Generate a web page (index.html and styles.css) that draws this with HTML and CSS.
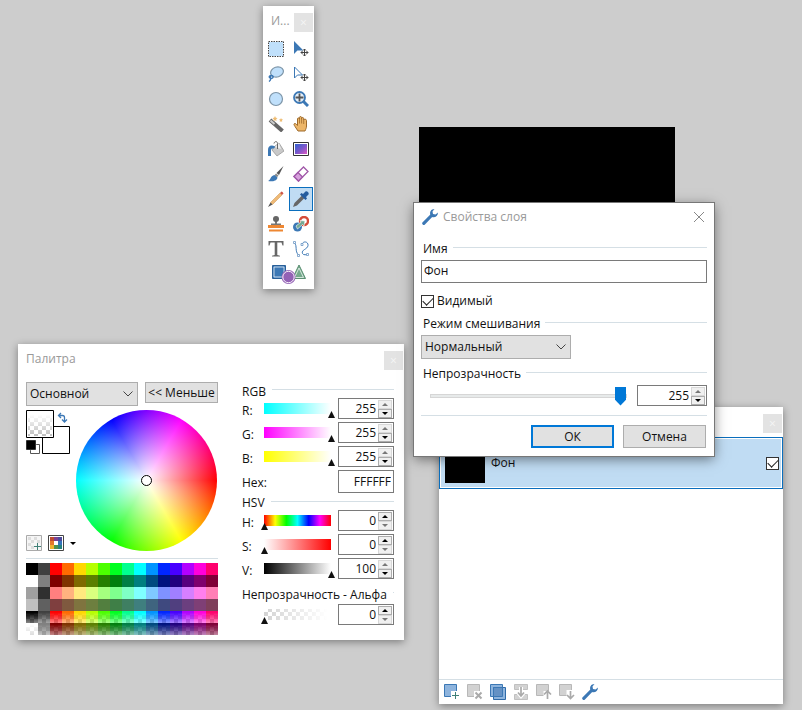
FILE: index.html
```
<!DOCTYPE html>
<html lang="ru">
<head>
    <meta charset="UTF-8">
    <meta name="viewport" content="width=device-width, initial-scale=1.0">
    <title>Редактор изображений</title>
    <link rel="stylesheet" href="styles.css">
</head>

<body>
    <main class="desktop">
        <div class="canvas"></div>

        <!-- Tools -->
        <section class="window tools">
            <header class="title-bar">
                <h2>И...</h2>
                <button class="tool-close" aria-label="Закрыть">×</button>
            </header>
            <div class="tool-grid">
                <button aria-label="Прямоугольник"><svg viewBox="0 0 16 16"><rect x="1" y="1" width="14" height="14" fill="#c0e0fb"/><rect x=".5" y=".5" width="15" height="15" fill="none" stroke="#444" stroke-dasharray="1.5 1"/></svg></button>
                <button aria-label="Переместить пиксели"><svg viewBox="0 0 16 16"><path d="M1 0v13l3.400-3.500h6z" fill="#3c78b5"/><path d="M11.500 8v7M8 11.500h7M10 9.500l1.500-1.500 1.500 1.500M10 13.500l1.500 1.500 1.500-1.500M9.500 10l-1.500 1.500 1.500 1.500M13.500 10l1.500 1.500-1.500 1.500" fill="none" stroke="#444"/></svg></button>
                <button aria-label="Лассо"><svg viewBox="0 0 16 16"><ellipse cx="9" cy="6" rx="6.500" ry="5" transform="rotate(-18 9 6)" fill="#c0e0fb" stroke="#7d95a8" stroke-width="1.200"/><path d="M3.500 9.500c-2 0-3 1.500-1.500 2.500s3.500 0 3-1.500-3.500-1-2.500 1.500c.5 1.500 0 2.500-1.500 3.500" fill="none" stroke="#3c78b5" stroke-width="1.400"/></svg></button>
                <button aria-label="Переместить выделение"><svg viewBox="0 0 16 16"><path d="M1.500 1v11l3-3h5z" fill="#fff" stroke="#3c78b5"/><path d="M11.500 8v7M8 11.500h7M10 9.500l1.500-1.500 1.500 1.500M10 13.500l1.500 1.500 1.500-1.500M9.500 10l-1.500 1.500 1.500 1.500M13.500 10l1.500 1.500-1.500 1.500" fill="none" stroke="#444"/></svg></button>
                <button aria-label="Эллипс"><svg viewBox="0 0 16 16"><circle cx="8" cy="8" r="6.500" fill="#c0e0fb" stroke="#7d95a8" stroke-width="1.200"/></svg></button>
                <button aria-label="Масштаб"><svg viewBox="0 0 16 16"><path d="M10 10l5 5" stroke="#3c78b5" stroke-width="3"/><circle cx="6.500" cy="6.500" r="5.500" fill="#e4eff9" stroke="#3c78b5" stroke-width="1.800"/><path d="M6.500 2.500v8M2.500 6.500h8" stroke="#555" stroke-width="1.800"/></svg></button>
                <button aria-label="Волшебная палочка"><svg viewBox="0 0 16 16"><path d="M2 4l12.500 11" stroke="#666" stroke-width="4"/><path d="M2.500 4.500l4 3.500" stroke="#ccc" stroke-width="2"/><path d="M7 0l.8 1.700 1.700.3-1.300 1.200.3 1.800L7 4.200 5.500 5l.3-1.800L4.500 2l1.700-.3zM13 2l.7 1.300 1.300.2-1 1 .2 1.500-1.200-.7-1.300.7.3-1.500-1-1 1.400-.2z" fill="#eebc72"/></svg></button>
                <button aria-label="Рука"><svg viewBox="0 0 16 16"><path d="M5 15L2 10.500C1 9 .5 8 1.500 7.500S4 9 4.500 9.500V3c0-1.500 2-1.500 2 0V1.500c0-1.300 2-1.300 2 0V2.500c.2-1.500 2.200-1.300 2.200.200V4c.3-1.300 2.800-1 2.800.5V10c0 2-.7 3-1.500 5z" fill="#edb668" stroke="#9d6a2c"/><path d="M6.500 3v4.500M8.600 2v5.500M10.700 4v4" stroke="#9d6a2c" stroke-width=".8"/></svg></button>
                <button aria-label="Заливка"><svg viewBox="0 0 16 16"><path d="M6 6l5-4 5 8-7 5-5-6z" fill="#c9c9c9" stroke="#999" stroke-width=".8"/><path d="M7 6l4-4 2 6z" fill="#eee"/><path d="M9.500 8V2.500C9.500 0 6.500 0 6 2.500" fill="none" stroke="#666"/><path d="M7 5.500C3 3.500 0 5 0 9v6h3V9.500C3 7 5 8 6.500 7z" fill="#3c78b5"/></svg></button>
                <button aria-label="Градиент"><svg viewBox="0 0 16 16"><defs><linearGradient id="grad" x1="0" y1="0" x2="1" y2="1"><stop offset="0" stop-color="#3262d0"/><stop offset=".5" stop-color="#7758cb"/><stop offset="1" stop-color="#dc58c3"/></linearGradient></defs><path d="M.5 1.500h15v13H.5z" fill="#fff" stroke="#333"/><path d="M2 3h12v10H2z" fill="url(#grad)"/></svg></button>
                <button aria-label="Кисть"><svg viewBox="0 0 16 16"><path d="M15.500 0L11 9 8.500 7z" fill="#555"/><path d="M8 7.500l2.500 2-1.500 1.800-2.500-2z" fill="#888"/><path d="M6.500 9l3 2.500C9 15 4 16 0 15c3-1 2-5 6.500-6z" fill="#3c78b5"/></svg></button>
                <button aria-label="Ластик"><svg viewBox="0 0 16 16"><path d="M1 10.500L10.500 1 15 5.500 5.500 15z" fill="#fff" stroke="#a057a8" stroke-width="1.300"/><path d="M1 10.500L5 6.500l4.500 4.500-4 4z" fill="#d6a0dc" stroke="#a057a8" stroke-width="1.300"/></svg></button>
                <button aria-label="Карандаш"><svg viewBox="0 0 16 16"><path d="M2.500 11.500l9.500-9.500 2 2-9.500 9.500z" fill="#efba77" stroke="#cb9048" stroke-width=".5"/><path d="M0 16l2.500-4.500 2 2z" fill="#555"/><path d="M12 2l1.500-1.500q1 0 2 2L14 4z" fill="#cf5648"/></svg></button>
                <button class="selected" aria-label="Пипетка"><svg viewBox="0 0 16 16"><path d="M0 16l1.500-4L9 4.500 11.500 7 4 14.500z" fill="#666"/><path d="M7 3.500L8.500 2 10 3l2.500-2.500c1.500-1 4 1.500 3 3L13 6l1 1.500L12.500 9z" fill="#245c9e"/></svg></button>
                <button aria-label="Штамп"><svg viewBox="0 0 16 16"><path d="M7 4h2v4H7zM3 7.500h10v1.500H3z" fill="#777"/><circle cx="8" cy="3" r="3" fill="#666"/><path d="M0 9h16v3H0zM1 13.500h14v2H1z" fill="#ee8732"/></svg></button>
                <button aria-label="Замена цвета"><svg viewBox="0 0 16 16"><circle cx="11" cy="5" r="4" fill="#fff" stroke="#d54c39" stroke-width="2.400"/><circle cx="4.500" cy="11" r="4.500" fill="#3c78b5"/><path d="M3 10l5-4-1-1.500 5 .5-1 5-1.500-1.500-5 4.500z" fill="#75a993" stroke="#fff" stroke-width=".6"/></svg></button>
                <button aria-label="Текст"><svg viewBox="0 0 16 16"><path d="M.5 0h15v4.500h-1L13.500 1.500H9.300v12.500l2.700.7v.8H4v-.8l2.700-.7V1.500H2.500l-1 3h-1z" fill="#666"/></svg></button>
                <button aria-label="Линия или кривая"><svg viewBox="0 0 16 16"><path d="M1.500 2c3 3 0 8 4 12M9 3.500c1-4 6.500-3 6 1s-7 4-5.500 8c1 2 4 1 5.500 1" fill="none" stroke="#3c78b5"/><path d="M.5.500h2v2h-2zM4.500 13.500h2v2h-2zM8 2.500h2v2H8zM13.500 12.500h2v2h-2z" fill="#fff" stroke="#6c97c4" stroke-width=".8"/></svg></button>
                <button class="shapes" aria-label="Фигуры"><svg viewBox="0 0 34 20"><path d="M.5 1.500h13v13H.5z" fill="#3c78b5" stroke="#285f98"/><path d="M2 3h10v10H2z" fill="none" stroke="#fff" stroke-width=".7"/><path d="M27 1l6.500 13.500h-13z" fill="#75a98c" stroke="#5b9073"/><path d="M27 4l4.500 9.500h-9z" fill="#75a98c" stroke="#fff" stroke-width=".7"/><circle cx="16.500" cy="13" r="7" fill="#9361b5"/><circle cx="16.500" cy="13" r="5.700" fill="#9361b5" stroke="#fff" stroke-width=".9"/></svg></button>
            </div>
        </section>

        <!-- Colors -->
        <section class="window colors">
            <header class="title-bar">
                <h2>Палитра</h2>
                <button class="tool-close" aria-label="Закрыть">×</button>
            </header>
            <div class="colors-body">
                <div class="colors-left">
                    <div class="colors-top">
                        <div class="select-box">
                            <select aria-label="Цвет"><option>Основной</option></select>
                            <svg viewBox="0 0 10 6"><path d="M.5.500L5 5 9.500.500"/></svg>
                        </div>
                        <button class="button less">&lt;&lt; Меньше</button>
                    </div>
                    <div class="picker">
                        <div class="picker-side">
                            <svg class="swatches" viewBox="0 0 44 44">
                                <defs>
                                    <pattern id="check" width="8" height="8" patternUnits="userSpaceOnUse"><path d="M0 0h8v8H0z" fill="#fff"/><path d="M0 0h4v4H0zM4 4h4v4H4z" fill="#bfbfbf"/></pattern>
                                    <linearGradient id="fade" x1="0" y1="0" x2="0" y2="1"><stop offset="0.1" stop-color="#fff"/><stop offset="1" stop-color="#fff" stop-opacity="0"/></linearGradient>
                                </defs>
                                <path d="M16.500 16.500h27v27h-27z" fill="#fff" stroke="#000"/>
                                <path d="M0 0h28v28H0z" fill="#fff"/>
                                <path d="M2 2h24v24H2z" fill="url(#check)"/>
                                <path d="M2 2h24v24H2z" fill="url(#fade)"/>
                                <path d="M.5.500h27v27H.5z" fill="none" stroke="#000"/>
                                <path d="M4.500 34.500h9v9h-9z" fill="#fff" stroke="#555"/>
                                <path d="M0 30h10v10H0z" fill="#000" stroke="#fff" stroke-width=".4"/>
                                <path d="M33 5.500h3.500q2 0 2 2V11M35 3l-2.500 2.500L35 8M36 9.500l2.500 2.500L41 9.500" fill="none" stroke="#3c78b5" stroke-width="1.300"/>
                            </svg>
                            <div class="palette-buttons">
                                <button aria-label="Добавить цвет"><svg viewBox="0 0 16 16"><path d="M.5.500h15v15H.5z" fill="#f5f5f5" stroke="#aaa"/><path d="M2 2h3v3H2zM8 2h3v3H8zM5 5h3v3H5zM11 5h3v3h-3zM2 8h3v3H2zM5 11h3v3H5z" fill="#ddd"/><path d="M11.500 8v7M8 11.500h7" stroke="#3f8077"/></svg></button>
                                <button aria-label="Палитры"><svg viewBox="0 0 16 16"><path d="M.5.500h15v15H.5z" fill="#fff" stroke="#444"/><path d="M2 2h4v4H2z" fill="#bd4b31"/><path d="M6 2h4v4H6z" fill="#7c4192"/><path d="M10 2h4v4h-4z" fill="#4c4a9b"/><path d="M2 6h4v4H2z" fill="#e3782c"/><path d="M10 6h4v4h-4z" fill="#3574bb"/><path d="M2 10h4v4H2z" fill="#ecb22f"/><path d="M6 10h4v4H6z" fill="#4d9150"/><path d="M10 10h4v4h-4z" fill="#27837f"/></svg></button>
                                <span class="drop-arrow"></span>
                            </div>
                        </div>
                        <div class="wheel"></div>
                    </div>
                    <div class="palette" id="palette"></div>
                </div>

                <div class="colors-right">
                    <h3 class="group rgb-title">RGB</h3>
                    <div class="channel">
                        <label for="red">R:</label>
                        <input class="ramp ramp-r" type="range" max="255" value="255" aria-label="R">
                        <span class="spin"><input id="red" type="text" value="255"><span class="arrows"><button class="up" disabled aria-label="Больше"></button><button class="down" aria-label="Меньше"></button></span></span>
                    </div>
                    <div class="channel">
                        <label for="green">G:</label>
                        <input class="ramp ramp-g" type="range" max="255" value="255" aria-label="G">
                        <span class="spin"><input id="green" type="text" value="255"><span class="arrows"><button class="up" disabled aria-label="Больше"></button><button class="down" aria-label="Меньше"></button></span></span>
                    </div>
                    <div class="channel">
                        <label for="blue">B:</label>
                        <input class="ramp ramp-b" type="range" max="255" value="255" aria-label="B">
                        <span class="spin"><input id="blue" type="text" value="255"><span class="arrows"><button class="up" disabled aria-label="Больше"></button><button class="down" aria-label="Меньше"></button></span></span>
                    </div>
                    <div class="channel">
                        <label for="hex">Hex:</label>
                        <input class="hex" id="hex" type="text" value="FFFFFF">
                    </div>
                    <h3 class="group hsv-title">HSV</h3>
                    <div class="channel">
                        <label for="hue">H:</label>
                        <input class="ramp ramp-h" type="range" max="360" value="0" aria-label="H">
                        <span class="spin"><input id="hue" type="text" value="0"><span class="arrows"><button class="up" aria-label="Больше"></button><button class="down" disabled aria-label="Меньше"></button></span></span>
                    </div>
                    <div class="channel">
                        <label for="sat">S:</label>
                        <input class="ramp ramp-s" type="range" max="100" value="0" aria-label="S">
                        <span class="spin"><input id="sat" type="text" value="0"><span class="arrows"><button class="up" aria-label="Больше"></button><button class="down" disabled aria-label="Меньше"></button></span></span>
                    </div>
                    <div class="channel">
                        <label for="val">V:</label>
                        <input class="ramp ramp-v" type="range" max="100" value="100" aria-label="V">
                        <span class="spin"><input id="val" type="text" value="100"><span class="arrows"><button class="up" disabled aria-label="Больше"></button><button class="down" aria-label="Меньше"></button></span></span>
                    </div>
                    <h3 class="group alpha-title"><label for="alpha">Непрозрачность - Альфа</label></h3>
                    <div class="channel">
                        <input class="ramp ramp-a" type="range" max="255" value="0" aria-label="Альфа">
                        <span class="spin"><input id="alpha" type="text" value="0"><span class="arrows"><button class="up" aria-label="Больше"></button><button class="down" disabled aria-label="Меньше"></button></span></span>
                    </div>
                </div>
            </div>
        </section>

        <!-- Layers -->
        <section class="window layers">
            <header class="title-bar">
                <button class="tool-close" aria-label="Закрыть">×</button>
            </header>
            <div class="layer-list">
                <div class="layer">
                    <span class="layer-thumb"></span>
                    <label for="layer-visible">Фон</label>
                    <input id="layer-visible" type="checkbox" checked>
                </div>
            </div>
            <footer class="layer-bar">
                <button aria-label="Добавить слой"><svg viewBox="0 0 16 16"><path d="M.5.500h12v12H.5z" fill="#8eb4dd" stroke="#3c78b5"/><path d="M7 7h9v9H7z" fill="#fff"/><path d="M11.500 8v7M8 11.500h7" stroke="#3f8077"/></svg></button>
                <button disabled aria-label="Удалить слой"><svg viewBox="0 0 16 16"><path d="M.5.500h12v12H.5z" fill="#d2d2d2" stroke="#b8b8b8"/><path d="M7 7h9v9H7z" fill="#fff"/><path d="M8.500 8.500l6 6M14.500 8.500l-6 6" stroke="#aaa" stroke-width="2"/></svg></button>
                <button aria-label="Дублировать слой"><svg viewBox="0 0 16 16"><path d="M.5.500h12v12H.5z" fill="#8eb4dd" stroke="#3c78b5"/><path d="M3.500 3.500h12v12h-12z" fill="#8eb4dd" stroke="#2e6aa8"/><path d="M3.500 3.500h9v9h-9z" fill="#6491c4" stroke="#3c78b5"/></svg></button>
                <button disabled aria-label="Объединить слой"><svg viewBox="0 0 16 16"><path d="M1.500.500h13v5h-13zM1.500 10.500h13v5h-13z" fill="#d2d2d2" stroke="#c0c0c0"/><path d="M8 3v8M5 8.500L8 12l3-3.500" fill="none" stroke="#fff" stroke-width="4"/><path d="M8 3v8M5 8.500L8 12l3-3.500" fill="none" stroke="#aaa" stroke-width="1.700"/></svg></button>
                <button disabled aria-label="Слой вверх"><svg viewBox="0 0 16 16"><path d="M.5.500h12v11H.5z" fill="#d2d2d2" stroke="#b8b8b8"/><path d="M7.500 7h8.500v9H7.500z" fill="#fff"/><path d="M11.500 7v8M8 10.500L11.500 7l3.500 3.500" fill="none" stroke="#aaa" stroke-width="1.700"/></svg></button>
                <button disabled aria-label="Слой вниз"><svg viewBox="0 0 16 16"><path d="M.5.500h12v11H.5z" fill="#d2d2d2" stroke="#b8b8b8"/><path d="M7.500 6h8.500v10H7.500z" fill="#fff"/><path d="M11.500 7v7.500M8 11l3.500 3.500L15 11" fill="none" stroke="#aaa" stroke-width="1.700"/></svg></button>
                <button aria-label="Свойства слоя"><svg viewBox="0 0 16 16"><path d="M1.800 14.300L9.500 6.500" stroke="#3c78b5" stroke-width="3.200" stroke-linecap="round"/><path d="M12.500 0C9 0 7.300 3 8.500 6l1.500 2c3 .8 6-.8 6-4.500L13.500 5.500 11 5 10.500 2.500z" fill="#3c78b5"/></svg></button>
            </footer>
        </section>

        <!-- Layer properties dialog -->
        <section class="window dialog">
            <header class="dialog-title">
                <svg viewBox="0 0 16 16"><path d="M1.800 14.300L9.500 6.500" stroke="#3c78b5" stroke-width="3.200" stroke-linecap="round"/><path d="M12.500 0C9 0 7.300 3 8.500 6l1.500 2c3 .8 6-.8 6-4.500L13.500 5.500 11 5 10.500 2.500z" fill="#3c78b5"/></svg>
                <h2>Свойства слоя</h2>
                <button class="dialog-close" aria-label="Закрыть"><svg viewBox="0 0 10 10"><path d="M0 0l10 10M10 0L0 10" stroke="#888"/></svg></button>
            </header>
            <form class="dialog-body">
                <h3 class="group"><label for="layer-name">Имя</label></h3>
                <input class="name-field" id="layer-name" type="text" value="Фон">
                <div class="check-row">
                    <input id="visible" type="checkbox" checked>
                    <label for="visible">Видимый</label>
                </div>
                <h3 class="group"><label for="blend">Режим смешивания</label></h3>
                <div class="select-box blend">
                    <select id="blend"><option>Нормальный</option></select>
                    <svg viewBox="0 0 10 6"><path d="M.5.500L5 5 9.500.500"/></svg>
                </div>
                <h3 class="group opacity-title"><label for="opacity">Непрозрачность</label></h3>
                <div class="opacity-row">
                    <input class="slider" type="range" max="255" value="255" aria-label="Непрозрачность">
                    <span class="spin"><input id="opacity" type="text" value="255"><span class="arrows"><button type="button" class="up" disabled aria-label="Больше"></button><button type="button" class="down" aria-label="Меньше"></button></span></span>
                </div>
                <div class="dialog-buttons">
                    <button type="button" class="button default">ОК</button>
                    <button type="button" class="button">Отмена</button>
                </div>
            </form>
        </section>
    </main>

    <script src="palette.js"></script>
</body>
</html>
```
FILE: palette.js
```
// Default palette, one array per row
var rows = [
    ["000000", "404040", "ff0000", "ff6a00", "ffd800", "b6ff00", "4cff00", "00ff21", "00ff90", "00ffff", "0094ff", "0026ff", "4800ff", "b200ff", "ff00dc", "ff006e"],
    ["ffffff", "808080", "7f0000", "7f3300", "7f6a00", "5b7f00", "267f00", "007f0e", "007f46", "007f7f", "004a7f", "00137f", "21007f", "57007f", "7f006e", "7f0037"],
    ["a0a0a0", "303030", "ff7f7f", "ffb27f", "ffe97f", "daff7f", "a5ff7f", "7fff8e", "7fffc5", "7fffff", "7fc9ff", "7f92ff", "a17fff", "d67fff", "ff7fed", "ff7fb6"],
    ["c0c0c0", "606060", "7f3f3f", "7f593f", "7f743f", "6d7f3f", "527f3f", "3f7f47", "3f7f62", "3f7f7f", "3f647f", "3f497f", "503f7f", "6b3f7f", "7f3f76", "7f3f5b"]
];

var palette = document.querySelector("#palette");

function addRow(colors, translucent) {
    colors.forEach(function(color) {
        var cell = document.createElement("button");
        cell.className = translucent ? "cell translucent" : "cell";
        cell.style.setProperty("--cell", "#" + color);
        cell.setAttribute("aria-label", "#" + color);
        palette.appendChild(cell);
    });
}

rows.forEach(function(colors) {
    addRow(colors, false);
});

// The last two rows repeat the first two at half opacity
addRow(rows[0], true);
addRow(rows[1], true);
```
FILE: styles.css
```
* {
    padding: 0;
    margin: 0;
    box-sizing: border-box;
}

:root {
    --blue: #0078d7;
    --line: #d5dfe5;
    --face: #e1e1e1;
    --edge: #adadad;
    --field: #7a7a7a;
}

body {
    background-color: #cdcdcd;
    color: #111;
    font-family: "Open Sans", "Noto Sans", sans-serif;
    font-size: 12px;
    line-height: 16px;
}

button, input, select {
    font: inherit;
    color: inherit;
    border: none;
    background: none;
    border-radius: 0;
    outline: none;
}

h2, h3 {
    font-size: 12px;
    font-weight: normal;
}

svg {
    display: block;
}

.desktop {
    position: relative;
    min-height: 100vh;
    overflow: hidden;
}

.canvas {
    position: absolute;
    left: 419px;
    top: 127px;
    width: 256px;
    height: 256px;
    background-color: #000;
}

/* Windows */
.window {
    position: absolute;
    background-color: #fff;
    box-shadow: 0 2px 8px rgba(0, 0, 0, 0.4);
}

.title-bar {
    display: flex;
    justify-content: space-between;
    padding: 7px 1px 0 8px;
    color: #999;
}

.tool-close {
    width: 19px;
    height: 19px;
    margin-left: auto;
    background-color: #e3e3e3;
    color: #f5f5f5;
    line-height: 19px;
}

/* Tools */
.tools {
    left: 263px;
    top: 6px;
    width: 51px;
}

.tool-grid {
    display: grid;
    grid-template-columns: 24px 24px;
    grid-auto-rows: 24px;
    gap: 1px;
    padding: 5px 1px 3px;
}

.tool-grid button {
    display: flex;
    align-items: center;
    justify-content: center;
}

.tool-grid svg {
    width: 16px;
    height: 16px;
}

.tool-grid .selected {
    border: 1px solid #0a6ebd;
    background-color: #c0dcf3;
}

.tool-grid .shapes {
    grid-column: span 2;
}

.tool-grid .shapes svg {
    width: 34px;
    height: 20px;
}

/* Shared controls */
.group {
    display: flex;
    align-items: center;
    gap: 5px;
}

.group::after {
    content: "";
    flex: 1;
    height: 1px;
    margin-bottom: 4px;
    background-color: var(--line);
}

.button {
    height: 23px;
    border: 1px solid var(--edge);
    background-color: var(--face);
}

.select-box {
    display: grid;
    align-items: center;
}

.select-box select {
    grid-area: 1 / 1;
    appearance: none;
    height: 24px;
    padding: 0 3px;
    border: 1px solid var(--edge);
    background-color: var(--face);
}

.select-box svg {
    grid-area: 1 / 1;
    justify-self: end;
    width: 10px;
    height: 6px;
    margin-right: 5px;
    fill: none;
    stroke: #444;
    pointer-events: none;
}

.spin {
    display: flex;
    align-items: center;
    width: 56px;
    height: 21px;
    padding-right: 1px;
    border: 1px solid var(--field);
    background-color: #fff;
}

.spin input {
    flex: 1;
    min-width: 0;
    padding-right: 2px;
    text-align: right;
}

.arrows {
    display: flex;
    flex-direction: column;
    width: 14px;
}

.arrows button {
    display: flex;
    align-items: center;
    justify-content: center;
    height: 9px;
    border: 1px solid var(--edge);
    background-color: #f0f0f0;
}

.arrows button:disabled {
    border-color: #d8d8d8;
}

.arrows button::before {
    content: "";
    border: 3px solid transparent;
    border-top: none;
    border-bottom-color: #000;
}

.arrows .down::before {
    border: 3px solid transparent;
    border-bottom: none;
    border-top-color: #000;
}

.arrows .up:disabled::before {
    border-bottom-color: #777;
}

.arrows .down:disabled::before {
    border-top-color: #777;
}

input[type="checkbox"] {
    appearance: none;
    display: grid;
    place-items: center;
    width: 13px;
    height: 13px;
    border: 1px solid #333;
    background-color: #fff;
}

input[type="checkbox"]:checked::before {
    content: "";
    width: 9px;
    height: 5px;
    margin-bottom: 3px;
    border-left: 1px solid #222;
    border-bottom: 1px solid #222;
    transform: rotate(-45deg);
}

/* Colors */
.colors {
    left: 18px;
    top: 344px;
    width: 386px;
}

.colors-body {
    display: flex;
    gap: 24px;
    padding: 12px 10px 5px 8px;
}

.colors-left {
    width: 192px;
}

.colors-top {
    display: flex;
    align-items: flex-start;
    gap: 7px;
}

.colors-top .select-box {
    width: 112px;
}

.less {
    flex: 1;
    height: 21px;
    line-height: 19px;
    white-space: nowrap;
}

.picker {
    display: flex;
    justify-content: space-between;
    padding: 4px 1px 7px 0;
    border-bottom: 1px solid var(--line);
}

.picker-side {
    display: flex;
    flex-direction: column;
    justify-content: space-between;
}

.swatches {
    width: 44px;
    height: 44px;
}

.palette-buttons {
    display: flex;
    align-items: center;
    gap: 6px;
    width: 50px;
}

.palette-buttons svg {
    width: 16px;
    height: 16px;
}

.drop-arrow {
    border: 3px solid transparent;
    border-top-color: #000;
    border-bottom: none;
}

.wheel {
    display: grid;
    place-items: center;
    width: 141px;
    height: 141px;
    border-radius: 50%;
    background: radial-gradient(closest-side, #fff, rgba(255, 255, 255, 0)), conic-gradient(from 90deg, #f00, #ff0, #0f0, #0ff, #00f, #f0f, #f00);
}

.wheel::before {
    content: "";
    width: 9px;
    height: 9px;
    border: 1px solid #000;
    border-radius: 50%;
    background-color: #fff;
}

.palette {
    display: grid;
    grid-template-columns: repeat(16, 12px);
    grid-auto-rows: 12px;
    margin-top: 4px;
}

.cell {
    background: var(--cell);
}

.translucent {
    background: linear-gradient(var(--cell) 10%, transparent 180%), repeating-conic-gradient(#bfbfbf 0 25%, #fff 0 50%) 0 0 / 8px 8px;
}

.colors-right {
    flex: 1;
}

.colors-right .group {
    gap: 6px;
}

.rgb-title {
    height: 16px;
    padding-top: 3px;
}

.hsv-title {
    height: 14px;
}

.alpha-title {
    height: 22px;
    padding-top: 3px;
}

.channel {
    display: flex;
    justify-content: flex-end;
    margin-bottom: 3px;
}

.channel label {
    margin-right: auto;
    padding-top: 5px;
}

.channel:last-child {
    margin-bottom: 0;
}

.hex {
    width: 56px;
    height: 23px;
    padding-right: 2px;
    border: 1px solid var(--field);
    text-align: right;
}

.ramp {
    --ramp: none;
    appearance: none;
    width: 74px;
    height: 20px;
    margin-right: 3px;
    background: var(--ramp) 3px 5px / 67px 11px no-repeat;
}

.ramp::-webkit-slider-runnable-track {
    height: 20px;
}

.ramp::-webkit-slider-thumb {
    appearance: none;
    width: 7px;
    height: 7px;
    margin-top: 13px;
    background-color: #111;
    clip-path: polygon(50% 0, 100% 100%, 0 100%);
}

.ramp-r {
    --ramp: linear-gradient(90deg, #0ff, #fff);
}

.ramp-g {
    --ramp: linear-gradient(90deg, #f0f, #fff);
}

.ramp-b {
    --ramp: linear-gradient(90deg, #ff0, #fff);
}

.ramp-h {
    --ramp: linear-gradient(90deg, #f00, #ff0, #0f0, #0ff, #00f, #f0f, #f00);
}

.ramp-s {
    --ramp: linear-gradient(90deg, #fff, #f00);
}

.ramp-v {
    --ramp: linear-gradient(90deg, #000, #fff);
}

/* White strips trim the checkerboard to the size of the other ramps */
.ramp-a {
    background:
        linear-gradient(#fff, #fff) 0 0 / 3px 100% no-repeat,
        linear-gradient(#fff, #fff) 0 0 / 100% 5px no-repeat,
        linear-gradient(#fff, #fff) 0 100% / 100% 4px no-repeat,
        linear-gradient(90deg, rgba(255, 255, 255, 0.1), #fff 90%),
        repeating-conic-gradient(#ccc 0 25%, #fff 0 50%) 3px 4px / 8px 8px;
}

/* Layers */
.layers {
    left: 439px;
    top: 407px;
    width: 344px;
}

.layer-list {
    min-height: 246px;
    padding-top: 4px;
}

.layer {
    display: flex;
    align-items: center;
    gap: 6px;
    height: 52px;
    padding: 0 3px;
    border: 1px solid #0a6ebd;
    background-color: #c0dcf3;
    box-shadow: inset 0 0 0 1px #fff;
}

.layer-thumb {
    width: 40px;
    height: 40px;
    margin-left: 2px;
    background-color: #000;
}

.layer label {
    flex: 1;
}

.layer-bar {
    display: flex;
    gap: 7px;
    padding: 4px 5px;
    border-top: 1px solid var(--line);
}

.layer-bar svg {
    width: 16px;
    height: 16px;
}

/* Layer properties */
.dialog {
    left: 414px;
    top: 203px;
    width: 300px;
    box-shadow: 0 0 0 1px #777, 0 3px 12px rgba(0, 0, 0, 0.5);
}

.dialog-title {
    display: flex;
    align-items: center;
    gap: 5px;
    padding: 6px 10px 0 8px;
    color: #999;
}

.dialog-title svg {
    width: 16px;
    height: 16px;
}

.dialog-close {
    margin-left: auto;
}

.dialog-close svg {
    width: 10px;
    height: 10px;
}

.dialog-body {
    padding: 16px 7px 8px;
}

.dialog-body .group {
    padding-left: 2px;
}

.name-field {
    width: 100%;
    height: 23px;
    margin-top: 3px;
    padding: 0 2px 2px;
    border: 1px solid var(--field);
}

.check-row {
    display: flex;
    align-items: center;
    gap: 3px;
    padding: 10px 0 7px;
}

.blend {
    width: 150px;
    margin-top: 3px;
}

.dialog-body .opacity-title {
    margin-top: 7px;
}

.opacity-row {
    display: flex;
    align-items: flex-start;
    justify-content: space-between;
    padding: 3px 0 9px 9px;
    border-bottom: 1px solid var(--line);
}

.opacity-row .spin {
    width: 70px;
}

.slider {
    appearance: none;
    flex: 1;
    height: 21px;
    margin-right: 10px;
}

.slider::-webkit-slider-runnable-track {
    height: 4px;
    border: 1px solid #d6d6d6;
    background-color: #e7eaea;
}

.slider::-webkit-slider-thumb {
    appearance: none;
    width: 11px;
    height: 19px;
    margin-top: -8px;
    background-color: var(--blue);
    clip-path: polygon(0 0, 100% 0, 100% 70%, 50% 100%, 0 70%);
}

.dialog-buttons {
    display: flex;
    justify-content: flex-end;
    gap: 9px;
    padding: 9px 1px 0 0;
}

.dialog-buttons .button {
    width: 83px;
}

.dialog-buttons .default {
    border: 2px solid var(--blue);
}
```
